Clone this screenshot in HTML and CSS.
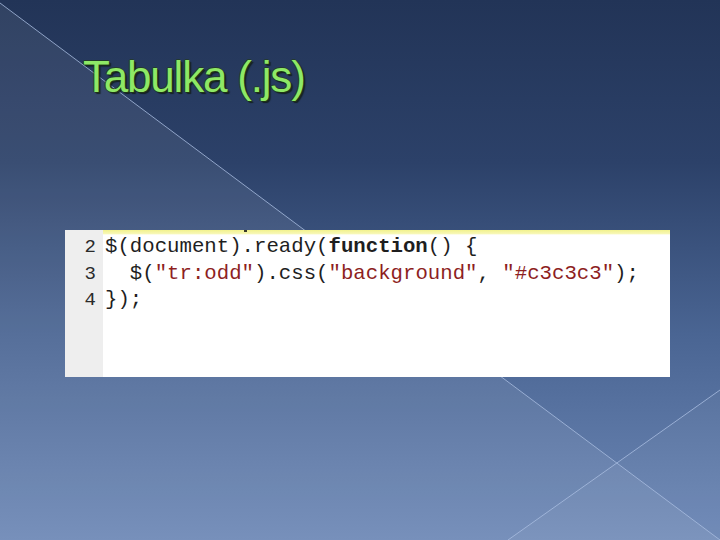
FILE: index.html
```html
<!DOCTYPE html>
<html lang="cs">
<head>
<meta charset="utf-8">
<title>Tabulka (.js)</title>
<link rel="stylesheet" href="styles.css">
</head>
<body>
<div class="slide">
  <svg class="deco" width="720" height="540" viewBox="0 0 720 540" aria-hidden="true">
    <polygon points="0,3 720,540 0,540" fill="#ffffff" fill-opacity="0.07"/>
    <polygon points="720,390 508,540 720,540" fill="#ffffff" fill-opacity="0.04"/>
    <line x1="0" y1="3" x2="720" y2="540" stroke="#a9bde0" stroke-width="1" stroke-opacity="0.8"/>
    <line x1="720" y1="390" x2="508" y2="540" stroke="#a9bde0" stroke-width="1" stroke-opacity="0.8"/>
  </svg>
  <h1 class="title">Tabulka (.js)</h1>
  <div class="code">
    <div class="gutter">
      <div class="ln">2</div>
      <div class="ln">3</div>
      <div class="ln">4</div>
    </div>
    <div class="src">
      <div class="hl"><span class="tick"></span></div>
      <div class="line">$(document).ready(<b>function</b>() {</div>
      <div class="line">  $(<span class="str">"tr:odd"</span>).css(<span class="str">"background"</span>, <span class="str">"#c3c3c3"</span>);</div>
      <div class="line">});</div>
    </div>
  </div>
</div>
</body>
</html>
```
FILE: styles.css
```css
html, body {
  margin: 0;
  padding: 0;
}
body {
  width: 720px;
  height: 540px;
  overflow: hidden;
}
.slide {
  position: relative;
  width: 720px;
  height: 540px;
  overflow: hidden;
  background: linear-gradient(180deg, #223457 0%, #2c4169 30%, #4a6593 62%, #6d88b6 100%);
  display: flex;
  flex-direction: column;
  padding: 55px 0 0 65px;
  box-sizing: border-box;
}
.deco {
  position: absolute;
  left: 0;
  top: 0;
}
.title {
  position: relative;
  margin: 0 0 0 18px;
  font-family: "Liberation Sans", Arial, sans-serif;
  font-weight: normal;
  font-size: 44px;
  line-height: 44px;
  letter-spacing: -1.2px;
  color: #8ee866;
  text-shadow: 1px 1px 0 #1f3318, -1px 0 0 rgba(35, 60, 25, 0.7), 0 -1px 0 rgba(35, 60, 25, 0.7), 2px 2px 1px rgba(10, 20, 10, 0.7);
}
.code {
  position: relative;
  margin-top: 131px;
  width: 605px;
  height: 147px;
  display: grid;
  grid-template-columns: 38px 1fr;
  background: #ffffff;
  font-family: "Liberation Mono", "Courier New", monospace;
  font-size: 20.7px;
  line-height: 26.5px;
}
.gutter {
  background: #eeeeee;
  padding: 4px 7px 0 0;
  text-align: right;
  color: #2a2a2a;
  font-size: 19px;
}
.src {
  position: relative;
  padding: 4px 0 0 2px;
  color: #1e1e1e;
}
.hl {
  position: absolute;
  left: 0;
  right: 0;
  top: 0;
  height: 5px;
  background: linear-gradient(180deg, #f2f28e 0%, #f7f7b4 70%, #ffffff 100%);
}
.tick {
  position: absolute;
  left: 141px;
  top: 0;
  width: 3px;
  height: 2px;
  background: #3a3a2a;
}
.line {
  position: relative;
  white-space: pre;
}
.line b {
  font-weight: bold;
}
.str {
  color: #8e1f1f;
}
```
